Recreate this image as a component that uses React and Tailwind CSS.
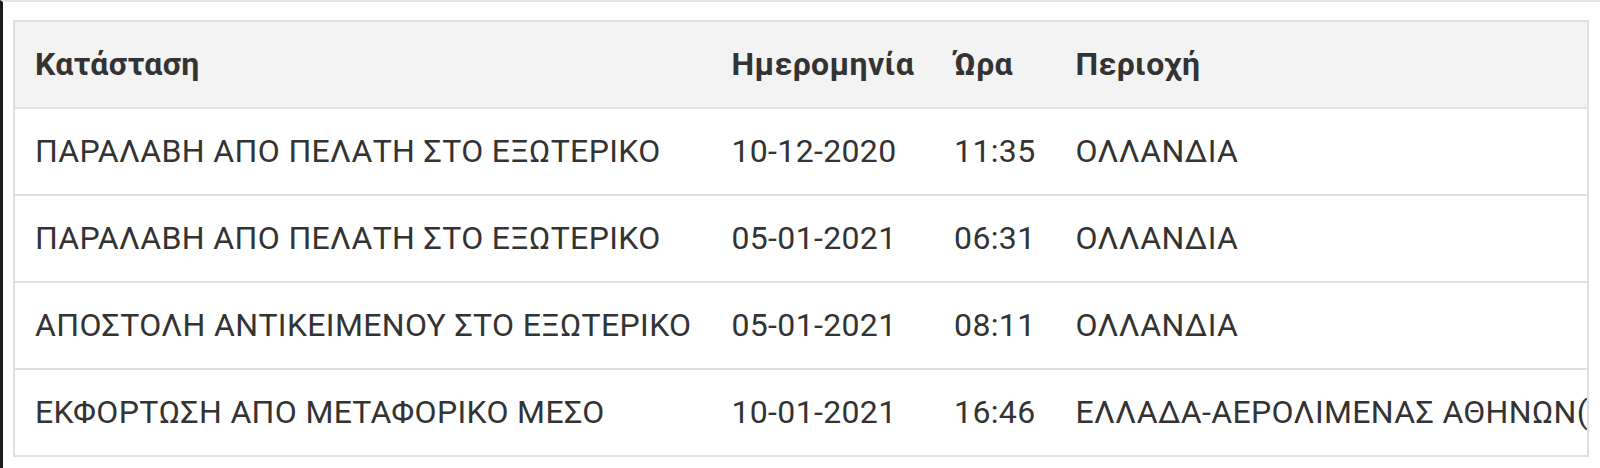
import React from "react";

const rows = [
  ["ΠΑΡΑΛΑΒΗ ΑΠΟ ΠΕΛΑΤΗ ΣΤΟ ΕΞΩΤΕΡΙΚΟ", "10-12-2020", "11:35", "ΟΛΛΑΝΔΙΑ"],
  ["ΠΑΡΑΛΑΒΗ ΑΠΟ ΠΕΛΑΤΗ ΣΤΟ ΕΞΩΤΕΡΙΚΟ", "05-01-2021", "06:31", "ΟΛΛΑΝΔΙΑ"],
  ["ΑΠΟΣΤΟΛΗ ΑΝΤΙΚΕΙΜΕΝΟΥ ΣΤΟ ΕΞΩΤΕΡΙΚΟ", "05-01-2021", "08:11", "ΟΛΛΑΝΔΙΑ"],
  ["ΕΚΦΟΡΤΩΣΗ ΑΠΟ ΜΕΤΑΦΟΡΙΚΟ ΜΕΣΟ", "10-01-2021", "16:46", "ΕΛΛΑΔΑ-ΑΕΡΟΛΙΜΕΝΑΣ ΑΘΗΝΩΝ(ΕΛ.ΒΕΝΙΖΕΛΟΣ)"],
];

const headers = ["Κατάσταση", "Ημερομηνία", "Ώρα", "Περιοχή"];

const App = () => {
  return (
    <div
      className="w-[1600px] h-[468px] bg-white border-t-2 border-t-[#e4e4e4] border-l-[3px] border-l-[#1c1c1c] overflow-hidden"
      style={{ fontFamily: "Roboto, 'Noto Sans', sans-serif" }}
    >
      <div className="ml-[10px] mt-[18px] w-[1576px] border-2 border-[#e0e0e0] overflow-hidden">
        <table className="border-collapse whitespace-nowrap text-[32px] tracking-[0.35px] leading-[47px] text-[#333]">
          <thead>
            <tr className="bg-[#f3f3f3] border-b-2 border-[#e0e0e0]">
              {headers.map((h) => (
                <th key={h} className="text-left font-bold py-[19px] px-5">
                  {h}
                </th>
              ))}
            </tr>
          </thead>
          <tbody>
            {rows.map((r, idx) => (
              <tr
                key={idx}
                className={idx < rows.length - 1 ? "border-b-2 border-[#e0e0e0]" : ""}
              >
                {r.map((c, i) => (
                  <td key={i} className="py-[19px] px-5">
                    {c}
                  </td>
                ))}
              </tr>
            ))}
          </tbody>
        </table>
      </div>
    </div>
  );
};

export default App;
